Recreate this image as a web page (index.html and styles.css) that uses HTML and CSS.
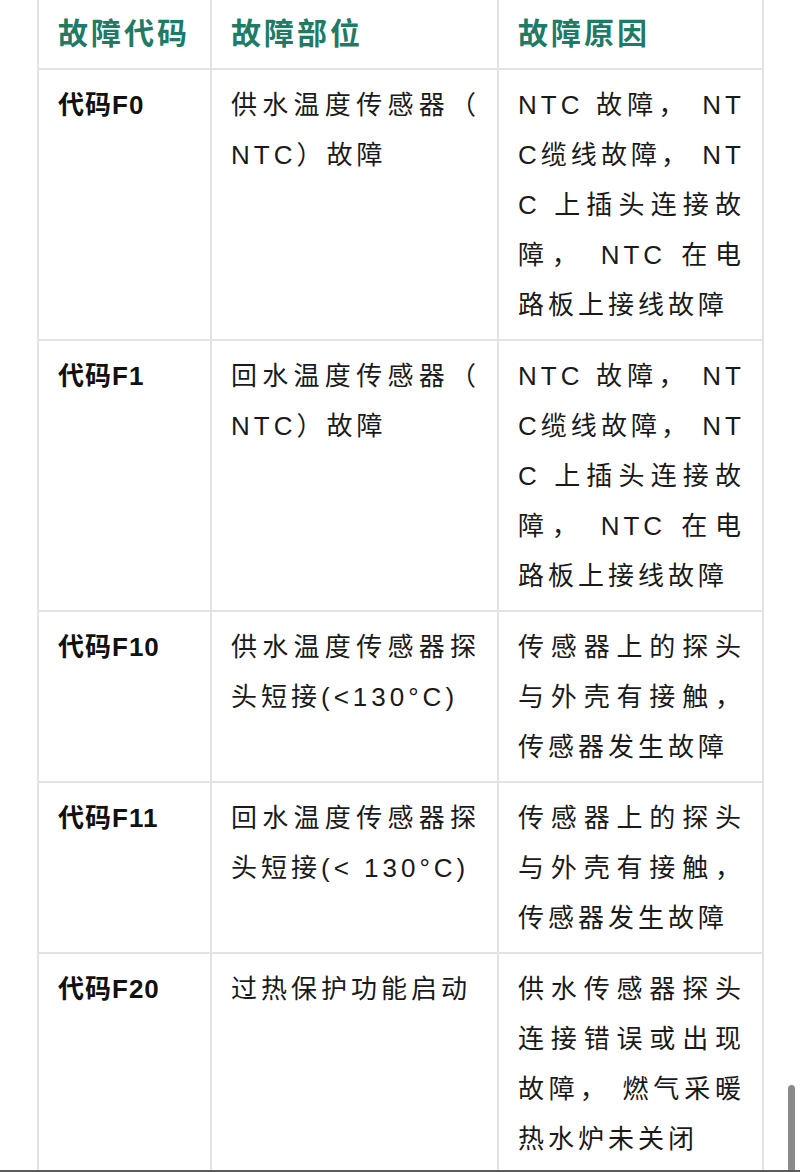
FILE: index.html
```html
<!DOCTYPE html>
<html lang="zh-CN">
<head>
<meta charset="utf-8">
<title>故障代码</title>
<link rel="stylesheet" href="styles.css">
</head>
<body>
<table class="fault-table">
  <colgroup>
    <col class="c1"><col class="c2"><col class="c3">
  </colgroup>
  <thead>
    <tr><th>故障代码</th><th>故障部位</th><th>故障原因</th></tr>
  </thead>
  <tbody>
    <tr>
      <td class="code">代码F0</td>
      <td><span class="ln j">供水温度传感器（</span><span class="ln">NTC）故障</span></td>
      <td><span class="ln j">NTC 故障， NT</span><span class="ln j">C缆线故障， NT</span><span class="ln j">C 上插头连接故</span><span class="ln j">障， NTC 在电</span><span class="ln">路板上接线故障</span></td>
    </tr>
    <tr>
      <td class="code">代码F1</td>
      <td><span class="ln j">回水温度传感器（</span><span class="ln">NTC）故障</span></td>
      <td><span class="ln j">NTC 故障， NT</span><span class="ln j">C缆线故障， NT</span><span class="ln j">C 上插头连接故</span><span class="ln j">障， NTC 在电</span><span class="ln">路板上接线故障</span></td>
    </tr>
    <tr>
      <td class="code">代码F10</td>
      <td><span class="ln j">供水温度传感器探</span><span class="ln">头短接(&lt;130°C)</span></td>
      <td><span class="ln j">传感器上的探头</span><span class="ln j">与外壳有接触，</span><span class="ln">传感器发生故障</span></td>
    </tr>
    <tr>
      <td class="code">代码F11</td>
      <td><span class="ln j">回水温度传感器探</span><span class="ln">头短接(&lt; 130°C)</span></td>
      <td><span class="ln j">传感器上的探头</span><span class="ln j">与外壳有接触，</span><span class="ln">传感器发生故障</span></td>
    </tr>
    <tr>
      <td class="code">代码F20</td>
      <td><span class="ln">过热保护功能启动</span></td>
      <td><span class="ln j">供水传感器探头</span><span class="ln j">连接错误或出现</span><span class="ln j">故障， 燃气采暖</span><span class="ln">热水炉未关闭</span></td>
    </tr>
  </tbody>
</table>
<div class="scroll-thumb"></div>
<div class="screen-edge"></div>
</body>
</html>
```

FILE: styles.css
```css
html, body {
  margin: 0;
  padding: 0;
  background: #ffffff;
}

body {
  font-family: "Liberation Sans", "Noto Sans CJK SC", sans-serif;
  color: #1a1a1a;
  overflow: hidden;
}

.fault-table {
  margin-left: 37px;
  width: 725px;
  table-layout: fixed;
  border-collapse: collapse;
  border-spacing: 0;
}

.c1 { width: 173px; }
.c2 { width: 287px; }
.c3 { width: 265px; }

.fault-table th,
.fault-table td {
  border: 2px solid #e3e3e3;
  vertical-align: top;
  text-align: left;
  padding: 10px 17px 9px 19px;
  line-height: 50px;
}

.fault-table th {
  border-top: 0;
  padding-top: 9px;
  padding-bottom: 9px;
  font-size: 30px;
  font-weight: 700;
  letter-spacing: 3px;
  color: #1f7a66;
}

.fault-table td {
  font-size: 26px;
  font-weight: 400;
  letter-spacing: 4px;
}

.fault-table td.code {
  font-weight: 700;
  letter-spacing: 1px;
  color: #111111;
}

.ln {
  display: block;
  white-space: nowrap;
}

.ln.j {
  text-align: justify;
  text-align-last: justify;
}

.scroll-thumb {
  position: fixed;
  left: 788px;
  top: 1085px;
  width: 7px;
  height: 100px;
  border-radius: 4px;
  background: #8a8a8a;
}

.screen-edge {
  position: fixed;
  left: 0;
  right: 0;
  bottom: 0;
  height: 2px;
  background: #5a5a5a;
}
```
